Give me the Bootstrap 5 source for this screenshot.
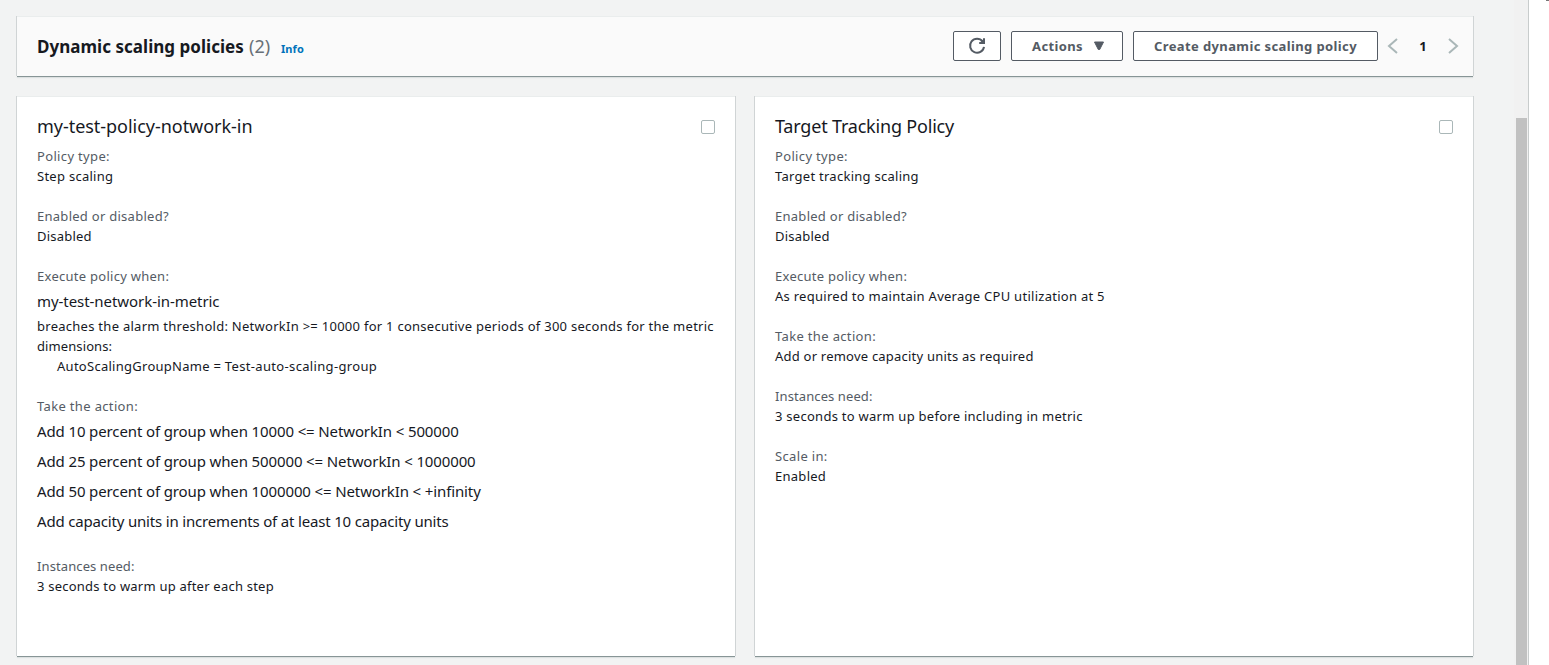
<!DOCTYPE html>
<html lang="en">
<head>
<meta charset="utf-8">
<meta name="viewport" content="width=device-width, initial-scale=1">
<title>Dynamic scaling policies</title>
<link href="https://cdn.jsdelivr.net/npm/bootstrap@5.3.0/dist/css/bootstrap.min.css" rel="stylesheet">
<style>
  body { font-family: "Noto Sans", "Open Sans", sans-serif; font-size: 13px; line-height: 20px; letter-spacing: .27px; color: #16191f; background: #fff; }
  .pane { width: 1514px; background: #f2f3f3; padding: 16px 41px 8px 17px; }
  .track { width: 14px; background: #f1f1f1; padding: 118px 1px 0 2px; }
  .thumb { background: #c1c1c1; }
  .help-panel { border-left: 1px solid #c8cccc; }
  .help-edge { width: 3px; height: 1px; background: #777; }
  .panel { border: 0; border-top: 1px solid #eaeded; border-radius: 0; color: inherit;
    box-shadow: 0 1px 0 0 #879596, -1px 0 0 0 #d0d4d5, 1px 0 0 0 #d0d4d5, 0 2px 1px 0 #dde1e1; }
  .panel-head { height: 60px; background: #fafafa; padding: 0 12px 2px 20px; }
  .policy { height: 560px; padding: 19px 20px; }
  .head-title { font-size: 17px; font-weight: 700; letter-spacing: .03px; }
  .head-count { font-size: 18px; color: #687078; letter-spacing: .13px; margin-left: 5px; }
  .info-link { font-size: 11px; font-weight: 700; color: #0073bb; letter-spacing: .11px; margin-left: 10.500px; }
  .actions { gap: 10px; }
  .btn-console { --bs-btn-color: #545b64; --bs-btn-bg: #fff; --bs-btn-border-color: #545b64; --bs-btn-border-radius: 2px;
    --bs-btn-hover-bg: #fafafa; --bs-btn-hover-color: #16191f; --bs-btn-hover-border-color: #16191f;
    --bs-btn-padding-x: 20px; --bs-btn-padding-y: 0; --bs-btn-font-size: 13px; --bs-btn-font-weight: 700; --bs-btn-line-height: 20px;
    height: 30px; letter-spacing: .386px; }
  .btn-refresh { width: 48px; }
  .btn-actions { width: 112px; }
  .btn-create { width: 245px; }
  .caret { margin-right: -3px; }
  .pager { margin-left: -3px; }
  .pager b { width: 44px; }
  .page-arrow { fill: none; stroke: #aab7b8; stroke-width: 2; }
  .policy-name { font-size: 18px; font-weight: 400; line-height: 20px; letter-spacing: -.036px; margin-bottom: 10px; }
  .policy .form-check-input { width: 14px; height: 14px; margin: 4px 0 0; border: 1px solid #aab7b8; border-radius: 2px; }
  .policy dl { margin: 0; }
  .policy dt { font-weight: 400; color: #545b64; }
  .policy dd { margin: 0 0 20px; }
  .dimension { padding-left: 20px; }
  .policy .step { font-size: 15px; line-height: 30px; letter-spacing: -.125px; }
  .metric-name { letter-spacing: -.06px !important; }
  .step-last { letter-spacing: -.179px; }
  .fit-name { letter-spacing: -.193px; }
  .fit-wide { letter-spacing: .34px; }
  .fit-tight { letter-spacing: .1px; }
  .fit-mid { letter-spacing: .22px; }
</style>
</head>
<body class="vh-100 overflow-hidden d-flex">
<main class="pane flex-shrink-0">
  <header class="card panel panel-head flex-row align-items-center justify-content-between">
    <div class="d-flex align-items-baseline">
      <h1 class="head-title m-0 lh-1">Dynamic scaling policies</h1>
      <span class="head-count lh-1">(2)</span>
      <a class="info-link text-decoration-none lh-1" href="#">Info</a>
    </div>
    <div class="actions d-flex align-items-center">
      <button class="btn btn-console btn-refresh p-0 d-flex align-items-center justify-content-center" aria-label="Refresh">
        <svg width="18" height="18" viewBox="0 0 18 18" fill="none" stroke="#545b64" stroke-width="2"><path d="M16 9.8A7 7 0 1 1 14.6 4.4"/><path d="M16 1.2V6H11.2"/><path d="M12.5 5L16 2V6Z" fill="#545b64" stroke="none"/></svg>
      </button>
      <button class="btn btn-console btn-actions d-flex align-items-center text-nowrap">Actions
        <svg class="caret ms-auto" width="12" height="10" viewBox="0 0 12 10"><path d="M1.5 1h9L6.700 8.500H5.300Z" fill="#545b64" stroke="#545b64" stroke-linejoin="round"/></svg>
      </button>
      <button class="btn btn-console btn-create text-nowrap">Create dynamic scaling policy</button>
      <nav class="pager d-flex align-items-center" aria-label="Pages">
        <svg class="page-arrow" width="16" height="16" viewBox="0 0 16 16"><path d="M12 1L4 8l8 7"/></svg>
        <b class="text-center">1</b>
        <svg class="page-arrow" width="16" height="16" viewBox="0 0 16 16"><path d="M4 1l8 7-8 7"/></svg>
      </nav>
    </div>
  </header>

  <div class="d-flex" style="gap:20px;margin-top:20px">
    <section class="card panel policy flex-fill w-50">
      <div class="d-flex justify-content-between">
        <h2 class="policy-name">my-test-policy-notwork-in</h2>
        <input class="form-check-input" type="checkbox" aria-label="Select my-test-policy-notwork-in">
      </div>
      <dl>
        <dt class="fit-wide">Policy type:</dt>
        <dd>Step scaling</dd>
        <dt>Enabled or disabled?</dt>
        <dd class="fit-mid">Disabled</dd>
        <dt>Execute policy when:</dt>
        <dd>
          <div class="step metric-name">my-test-network-in-metric</div>
          <div>breaches the alarm threshold: NetworkIn &gt;= 10000 for 1 consecutive periods of 300 seconds for the metric <span class="fit-tight">dimensions:</span></div>
          <div class="dimension">AutoScalingGroupName = <span class="fit-wide">Test-auto-scaling-group</span></div>
        </dd>
        <dt class="fit-wide">Take the action:</dt>
        <dd class="step">
          <div>Add 10 percent of group when 10000 &lt;= NetworkIn &lt; 500000</div>
          <div>Add 25 percent of group when 500000 &lt;= NetworkIn &lt; 1000000</div>
          <div>Add 50 percent of group when 1000000 &lt;= NetworkIn &lt; +infinity</div>
          <div class="step-last">Add capacity units in increments of at least 10 capacity units</div>
        </dd>
        <dt class="fit-tight">Instances need:</dt>
        <dd class="fit-mid">3 seconds to warm up after each step</dd>
      </dl>
    </section>

    <section class="card panel policy flex-fill w-50">
      <div class="d-flex justify-content-between">
        <h2 class="policy-name fit-name">Target Tracking Policy</h2>
        <input class="form-check-input" type="checkbox" aria-label="Select Target Tracking Policy">
      </div>
      <dl>
        <dt class="fit-wide">Policy type:</dt>
        <dd>Target tracking scaling</dd>
        <dt>Enabled or disabled?</dt>
        <dd class="fit-mid">Disabled</dd>
        <dt>Execute policy when:</dt>
        <dd>As required to maintain Average CPU utilization at 5</dd>
        <dt class="fit-wide">Take the action:</dt>
        <dd class="fit-mid">Add or remove capacity units as required</dd>
        <dt class="fit-tight">Instances need:</dt>
        <dd>3 seconds to warm up before including in metric</dd>
        <dt class="fit-wide">Scale in:</dt>
        <dd>Enabled</dd>
      </dl>
    </section>
  </div>
</main>
<div class="track d-flex flex-shrink-0"><div class="thumb flex-fill"></div></div>
<aside class="help-panel flex-fill d-flex justify-content-end"><div class="help-edge"></div></aside>
<script src="https://cdn.jsdelivr.net/npm/bootstrap@5.3.0/dist/js/bootstrap.bundle.min.js"></script>
</body>
</html>
